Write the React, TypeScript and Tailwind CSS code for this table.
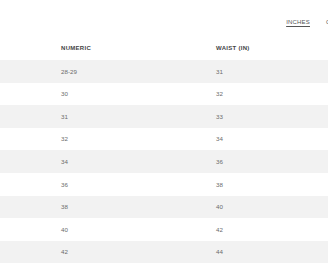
const rows = [
  ['28-29', '31'],
  ['30', '32'],
  ['31', '33'],
  ['32', '34'],
  ['34', '36'],
  ['36', '38'],
  ['38', '40'],
  ['40', '42'],
  ['42', '44'],
];

export default function App() {
  return (
    <div className="h-[264px] w-[328px] overflow-hidden bg-white font-['Liberation_Sans',Arial,sans-serif] text-[#555]">
      <div className="flex h-[36px] items-center justify-end gap-[16px] pt-[8px] text-[6px] tracking-[0.2px] whitespace-nowrap">
        <span className="underline underline-offset-[2px]">INCHES</span>
        <span className="-mr-[18px] w-[20px]">CM</span>
      </div>
      <div className="flex h-[24px] items-center pl-[61px] text-[6px] font-semibold tracking-[0.3px] text-[#444]">
        <div className="w-[155px]">NUMERIC</div>
        <div>WAIST (IN)</div>
      </div>
      {rows.map(([a, b], i) => (
        <div
          key={a}
          className={`flex h-[22.6px] items-center pl-[61px] text-[6.2px] text-[#6b6b6b] ${i % 2 === 0 ? 'bg-[#f2f2f2]' : 'bg-white'}`}
        >
          <div className="w-[155px]">{a}</div>
          <div>{b}</div>
        </div>
      ))}
    </div>
  );
}
